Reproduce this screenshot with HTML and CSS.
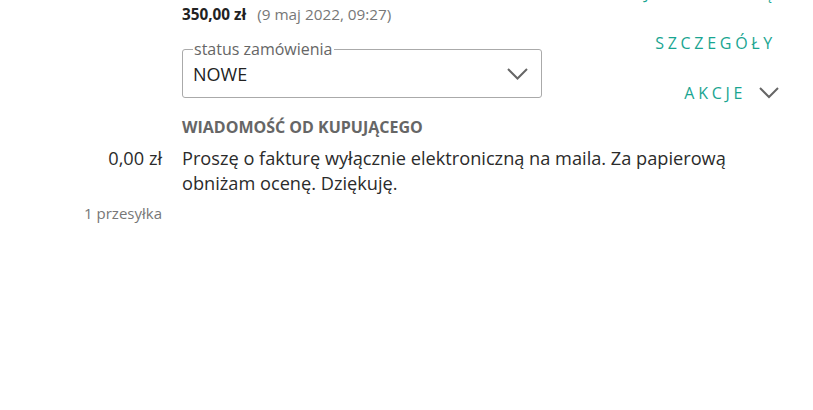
FILE: index.html
```html
<!DOCTYPE html>
<html lang="pl">
<head>
<meta charset="utf-8">
<title>Zamówienie</title>
<link rel="stylesheet" href="styles.css">
</head>
<body>
<div class="order">
  <div class="main">
    <div class="price-line"><span class="price">350,00 zł</span><span class="date">(9 maj 2022, 09:27)</span></div>
    <fieldset class="status">
      <legend class="status-label">status zamówienia</legend>
      <div class="status-row">
        <span class="status-value">NOWE</span>
        <svg class="chev" width="21" height="12" viewBox="0 0 21 12"><path d="M1 1 L10.5 10.5 L20 1" fill="none" stroke="#666" stroke-width="2"/></svg>
      </div>
    </fieldset>
    <div class="msg-head">WIADOMOŚĆ OD KUPUJĄCEGO</div>
  </div>
  <div class="actions">
    <a class="link link-plain">DODAJ PRZESYŁKĘ</a>
    <a class="link link-plain">SZCZEGÓŁY</a>
    <a class="link">AKCJE<svg class="chev-link" width="20" height="12" viewBox="0 0 20 12"><path d="M1 1 L10 10 L19 1" fill="none" stroke="#666" stroke-width="2"/></svg></a>
  </div>
  <div class="amount">0,00 zł</div>
  <div class="message">Proszę o fakturę wyłącznie elektroniczną na maila. Za papierową obniżam ocenę. Dziękuję.</div>
  <div class="shipments">1 przesyłka</div>
</div>
</body>
</html>
```
FILE: styles.css
```css
html, body {
  margin: 0;
  padding: 0;
  background: #fff;
}
body {
  font-family: "Open Sans", "Noto Sans", sans-serif;
  color: #2b2b2b;
  overflow: hidden;
}
.order {
  display: grid;
  grid-template-columns: 162px 1fr auto;
  column-gap: 20px;
  width: 779px;
}
.main {
  grid-column: 2;
  grid-row: 1;
  display: flex;
  flex-direction: column;
  align-items: flex-start;
}
.price-line {
  margin-top: 4px;
  line-height: 20px;
  font-size: 15.3px;
}
.price {
  font-weight: 700;
  color: #222;
  margin-right: 11px;
}
.date {
  color: #777;
}
.status {
  margin: 15px 0 0;
  padding: 0 10px 0 10px;
  width: 360px;
  box-sizing: border-box;
  height: 59px;
  border: 1px solid #aaa;
  border-radius: 3px;
  min-width: 0;
}
.status-label {
  padding: 0 1px;
  margin-left: 0;
  font-size: 16px;
  line-height: 20px;
  color: #666;
}
.status-row {
  display: flex;
  align-items: center;
  justify-content: space-between;
  height: 28px;
  margin-top: 1px;
}
.status-value {
  font-size: 18px;
  line-height: 24px;
  color: #222;
}
.chev {
  margin-right: 3px;
  display: block;
}
.msg-head {
  margin-top: 19px;
  margin-bottom: 9px;
  font-size: 16px;
  line-height: 20px;
  font-weight: 700;
  color: #666;
}
.actions {
  grid-column: 3;
  grid-row: 1;
  margin-top: -19px;
  display: flex;
  flex-direction: column;
  align-items: flex-end;
  gap: 26px;
}
.link {
  display: flex;
  align-items: center;
  height: 24px;
  font-size: 16px;
  letter-spacing: 3.7px;
  color: #19a591;
  white-space: nowrap;
}
.link-plain {
  margin-right: 3px;
}
.chev-link {
  margin-left: 13px;
  display: block;
}
.amount {
  grid-column: 1;
  grid-row: 2;
  text-align: right;
  font-size: 18.2px;
  line-height: 25px;
}
.message {
  grid-column: 2 / span 2;
  grid-row: 2;
  font-size: 18.2px;
  line-height: 25px;
}
.shipments {
  grid-column: 1;
  grid-row: 3;
  text-align: right;
  font-size: 15px;
  line-height: 20px;
  margin-top: 7px;
  color: #777;
}
```
